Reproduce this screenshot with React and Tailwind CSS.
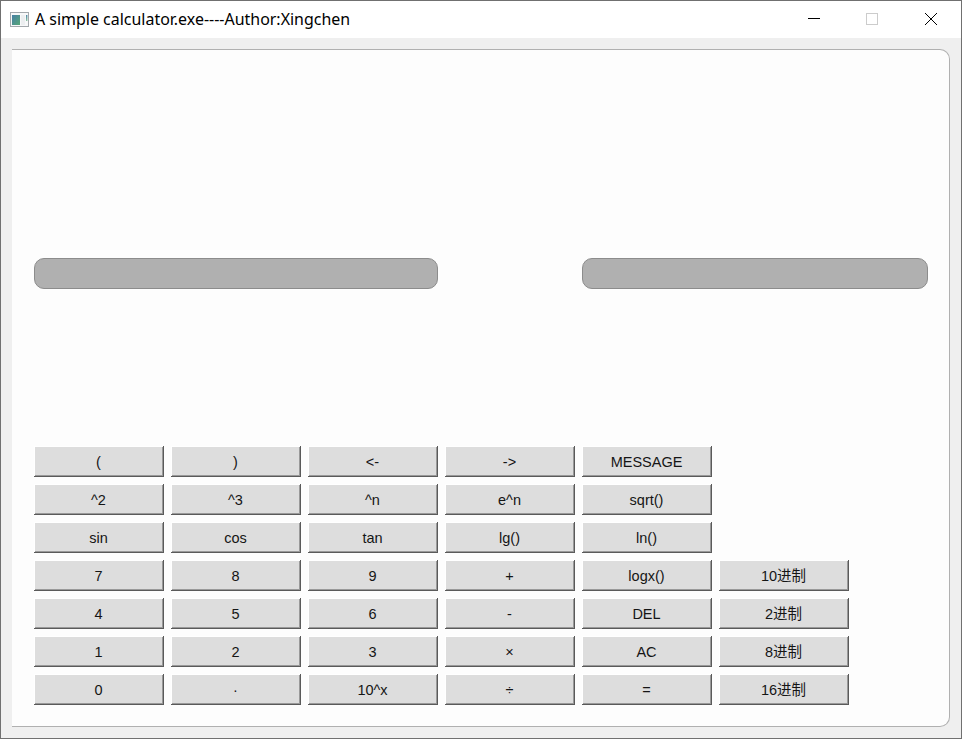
const rows = [
  ['(', ')', '<-', '->', 'MESSAGE'],
  ['^2', '^3', '^n', 'e^n', 'sqrt()'],
  ['sin', 'cos', 'tan', 'lg()', 'ln()'],
  ['7', '8', '9', '+', 'logx()', '10进制'],
  ['4', '5', '6', '-', 'DEL', '2进制'],
  ['1', '2', '3', '×', 'AC', '8进制'],
  ['0', '·', '10^x', '÷', '=', '16进制'],
];

function Key({ label }) {
  return (
    <button className="h-[31px] w-[130px] border-r border-b border-[#5a5a5a] bg-[#5a5a5a]">
      <span className="block h-full w-full bg-white pt-px pl-px">
        <span className="flex h-full w-full items-center justify-center border-r border-b border-[#999] bg-[#ddd] pt-[2px] whitespace-nowrap">
          {label}
        </span>
      </span>
    </button>
  );
}

function AppIcon() {
  return (
    <svg width="19" height="16" viewBox="0 0 19 16">
      <defs>
        <linearGradient id="pane" x1="0" y1="0" x2="1" y2="1">
          <stop offset="0" stopColor="#477fa5" />
          <stop offset="1" stopColor="#57a777" />
        </linearGradient>
        <linearGradient id="strip" x1="0" y1="0" x2="0" y2="1">
          <stop offset="0" stopColor="#4f86a8" />
          <stop offset="1" stopColor="#8cc5a0" />
        </linearGradient>
      </defs>
      <rect x="0.5" y="0.5" width="18" height="14" fill="#f7f8f9" stroke="#a3a8ac" />
      <rect x="2" y="3" width="8" height="10" fill="url(#pane)" />
      <rect x="11" y="3" width="4" height="10" fill="#eceef0" />
      <rect x="16" y="3" width="1.4" height="6" fill="url(#strip)" />
    </svg>
  );
}

export default function App() {
  return (
    <div className="flex h-[739px] w-[962px] flex-col overflow-hidden border border-[#707070] bg-[#efefef]">
      <header className="flex h-[37px] shrink-0 items-center justify-between bg-white pr-[23px] pl-[9px]">
        <div className="flex items-center gap-[6px]">
          <AppIcon />
          <h1 className="pb-[2px] font-['Noto_Sans','Open_Sans',sans-serif] text-[15.96px] leading-5 whitespace-nowrap text-black">
            A simple calculator.exe----Author:Xingchen
          </h1>
        </div>
        <div className="flex items-center gap-[46px] pb-px">
          <svg width="12" height="12" shapeRendering="crispEdges">
            <path d="M0 5.5H12" stroke="#000" />
          </svg>
          <svg width="12" height="12" shapeRendering="crispEdges">
            <rect x="0.5" y="0.5" width="11" height="11" fill="none" stroke="#ccc" />
          </svg>
          <svg width="14" height="12">
            <path d="M1 0L13 12M13 0L1 12" stroke="#000" strokeWidth="1" />
          </svg>
        </div>
      </header>
      <main className="mt-[11px] ml-[11px] flex h-[678px] w-[938px] shrink-0 flex-col rounded-r-[10px] border-t border-r border-b border-[#b0b0b0] bg-[#fdfdfd] pl-[22px]">
        <div className="mt-[208px] flex gap-[144px]">
          <div className="h-[31px] w-[404px] rounded-[10px] border border-[#8c8c8c] bg-[#b0b0b0]" />
          <div className="h-[31px] w-[346px] rounded-[10px] border border-[#8c8c8c] bg-[#b0b0b0]" />
        </div>
        <div className="mt-[157px] flex flex-col gap-[7px] font-['Liberation_Sans','Noto_Sans_CJK_SC',sans-serif] text-[14.5px] leading-[18px] text-[#151515]">
          {rows.map((row) => (
            <div key={row[0]} className="flex gap-[7px]">
              {row.map((label) => (
                <Key key={label} label={label} />
              ))}
            </div>
          ))}
        </div>
      </main>
    </div>
  );
}
